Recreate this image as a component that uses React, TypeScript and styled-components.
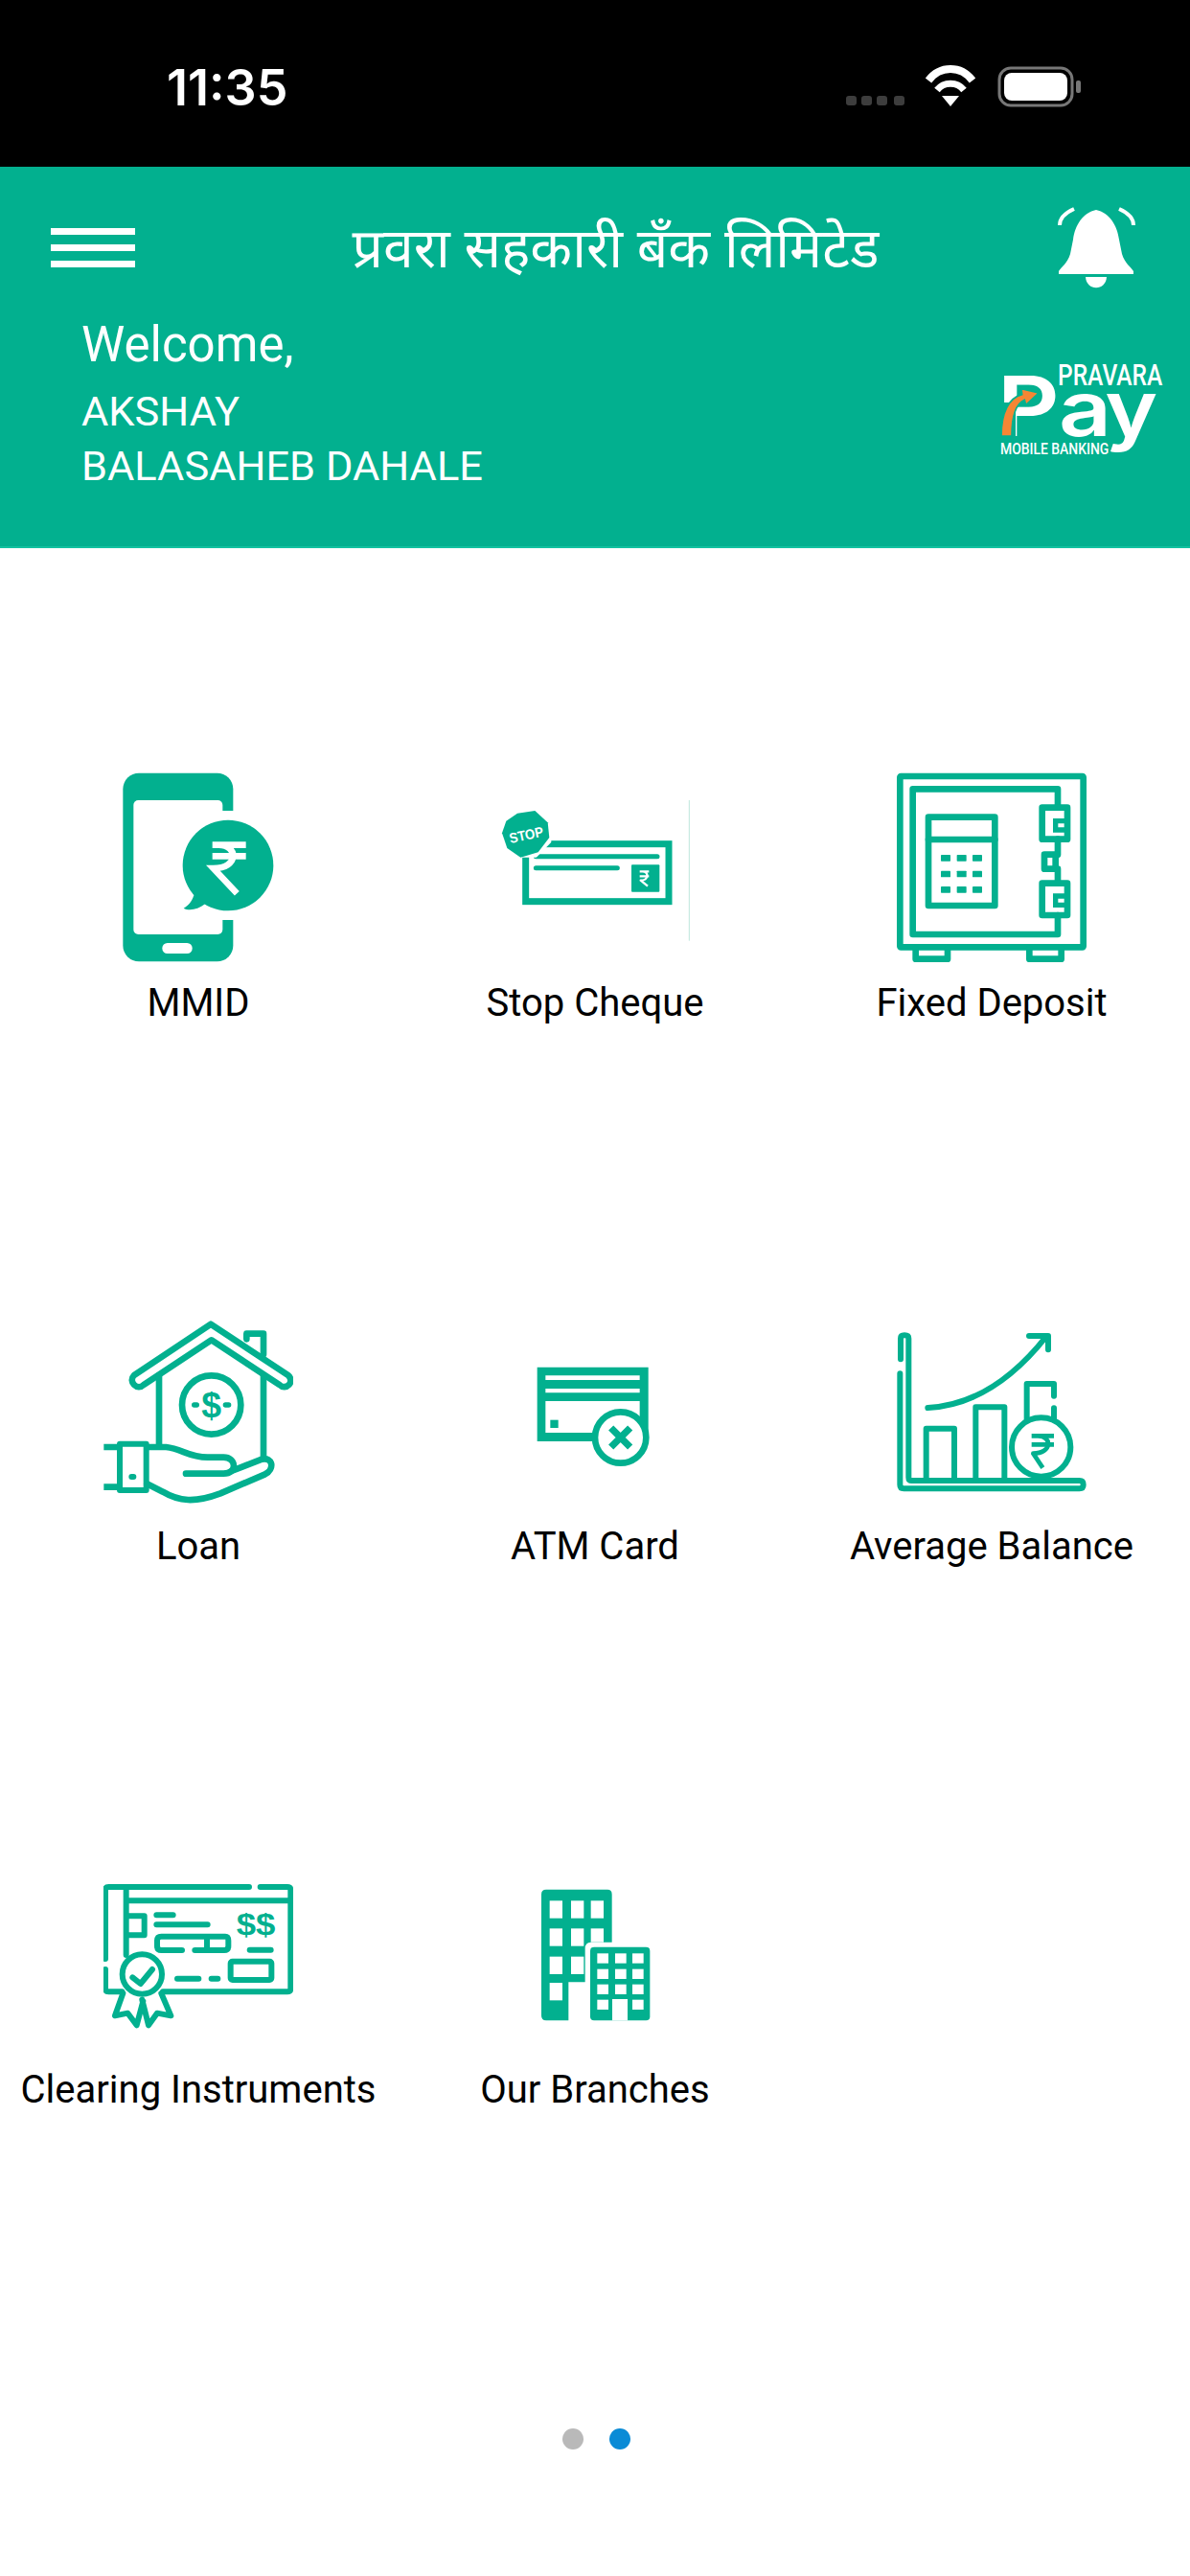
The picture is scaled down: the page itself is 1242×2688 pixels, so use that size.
import React from 'react';
import styled, { createGlobalStyle } from 'styled-components';

const GREEN = '#02b08f';

const GlobalStyle = createGlobalStyle`
  html, body {
    margin: 0;
    padding: 0;
    background: #ffffff;
    font-family: Roboto, "Liberation Sans", sans-serif;
  }
`;

const Screen = styled.div`
  width: 1242px;
  height: 2688px;
  display: flex;
  flex-direction: column;
  background: #ffffff;
  overflow: hidden;
`;

const StatusBar = styled.div`
  height: 174px;
  flex: none;
  background: #000000;
  display: flex;
  align-items: flex-start;
  justify-content: space-between;
  padding: 64px 113px 0 174px;
  box-sizing: border-box;
`;

const Clock = styled.span`
  font-family: Inter, Roboto, sans-serif;
  font-weight: 600;
  font-size: 52px;
  line-height: 56px;
  color: #ffffff;
`;

const StatusIcons = styled.svg`
  width: 250px;
  height: 46px;
  margin-top: 4px;
`;

const Header = styled.header`
  height: 398px;
  flex: none;
  background: ${GREEN};
  border-bottom: 2px solid #12c2a0;
  box-sizing: border-box;
  padding: 42px 16px 0 53px;
  display: flex;
  flex-direction: column;
`;

const TopRow = styled.div`
  display: flex;
  align-items: center;
  padding-right: 41px;
  height: 85px;
`;

const Burger = styled.div`
  width: 88px;
  flex: none;
  display: flex;
  flex-direction: column;
  gap: 10px;
`;

const BurgerBar = styled.span`
  display: block;
  height: 7px;
  background: #ffffff;
`;

const Title = styled.h1`
  flex: 1;
  margin: 14px 0 0;
  padding-left: 40px;
  text-align: center;
  color: #ffffff;
  font-family: "Noto Sans Devanagari", "Noto Serif Devanagari", "Lohit Devanagari", FreeSans, sans-serif;
  font-weight: 400;
  font-size: 57px;
  line-height: 85px;
`;

const Bell = styled.svg`
  width: 81px;
  height: 85px;
  flex: none;
`;

const InfoRow = styled.div`
  display: flex;
  justify-content: space-between;
  align-items: flex-start;
  padding-left: 32px;
  margin-top: 29px;
`;

const Welcome = styled.div`
  font-size: 51px;
  line-height: 60px;
  color: #ffffff;
`;

const UserName = styled.div<{ $first?: boolean }>`
  font-size: 43.4px;
  line-height: 57px;
  color: #ffffff;
  margin-top: ${(p) => (p.$first ? '11px' : '0')};
`;

const Logo = styled.svg`
  width: 186px;
  height: 113px;
  margin-top: 43px;
  overflow: visible;
`;

const Grid = styled.main`
  display: grid;
  grid-template-columns: repeat(3, 414px);
  grid-auto-rows: 567px;
  padding-top: 234px;
`;

const Cell = styled.div`
  display: flex;
  flex-direction: column;
  align-items: center;
`;

const IconSvg = styled.svg`
  width: 198px;
  height: 198px;
  flex: none;
  fill: none;
  stroke: ${GREEN};
  stroke-linecap: round;
  stroke-linejoin: round;
  stroke-width: 20;

  text {
    stroke: none;
    fill: ${GREEN};
    font-family: "Liberation Sans", sans-serif;
    font-weight: 700;
  }
`;

const Label = styled.span`
  margin-top: 21px;
  font-size: 40px;
  line-height: 44px;
  color: #000000;
  white-space: nowrap;
`;

const Pager = styled.div`
  display: flex;
  justify-content: center;
  gap: 27px;
  margin: 27px 0 0 2px;
`;

const Dot = styled.span<{ $active?: boolean }>`
  width: 22px;
  height: 22px;
  border-radius: 50%;
  background: ${(p) => (p.$active ? '#0a8bd6' : '#b9b9b9')};
`;

const MmidIcon = () => (
  <IconSvg viewBox="84 78 594 594">
    <rect x="145" y="80" width="345" height="590" rx="50" fill={GREEN} stroke="none" />
    <rect x="178" y="165" width="279" height="420" rx="15" fill="#fff" stroke="none" />
    <rect x="450" y="198" width="50" height="342" fill="#fff" stroke="none" />
    <rect x="268" y="612" width="94" height="33" rx="16" fill="#fff" stroke="none" />
    <circle cx="474" cy="369" r="142" fill={GREEN} stroke="none" />
    <path d="M367 462 C360 485 348 495 335 503 C350 512 380 508 402 490 Z" fill={GREEN} stroke="none" />
    <path d="M425 305 H530 M425 340 H530 M445 305 C505 305 510 378 428 378 L502 457" stroke="#fff" strokeWidth="20" strokeLinecap="butt" strokeLinejoin="miter" />
  </IconSvg>
);

const StopChequeIcon = () => (
  <IconSvg viewBox="66 -12 594 594">
    <rect x="146" y="212" width="448" height="180" strokeWidth="21" strokeLinejoin="miter" />
    <path d="M178 251 H558 M178 287 H433" strokeWidth="15" />
    <rect x="477" y="277" width="88" height="85" rx="3" fill={GREEN} stroke="none" />
    <path d="M503 298 H532 M503 313 H532 M512 298 C532 298 532 326 506 326 L528 344" stroke="#fff" strokeWidth="7" strokeLinecap="butt" />
    <polygon points="115,110 178,110 222,155 222,205 178,250 115,250 72,205 72,155" fill="#fff" stroke="#fff" strokeWidth="8" />
    <polygon points="120,116 175,108 215,145 220,192 185,238 130,254 88,225 72,178 85,140" fill={GREEN} stroke="none" />
    <text x="148" y="199" fontSize="44" textLength="108" lengthAdjust="spacingAndGlyphs" textAnchor="middle" transform="rotate(-12 148 185)" style={{ fill: '#fff' }}>STOP</text>
    <path d="M658 75 V515" stroke="#bfe6dd" strokeWidth="3" strokeLinecap="butt" />
  </IconSvg>
);

const FixedDepositIcon = () => (
  <IconSvg viewBox="48 48 594 594">
    <rect x="58" y="60" width="574" height="535" rx="3" />
    <path d="M552 158 V100 H98 V555 H552 V495 M552 257 V305 M552 350 V395" />
    <rect x="147" y="188" width="208" height="277" />
    <path d="M147 258 H355" />
    {[316, 366, 415].map((y) =>
      [201, 251, 300].map((x) => <rect key={`${x}-${y}`} x={x - 15} y={y - 10} width="30" height="20" rx="2" fill={GREEN} stroke="none" />),
    )}
    <rect x="503" y="158" width="79" height="99" />
    <path d="M580 200 H545 V228 H580" strokeLinecap="butt" strokeLinejoin="miter" strokeWidth="16" />
    <rect x="510" y="305" width="35" height="45" />
    <rect x="503" y="395" width="79" height="100" />
    <path d="M580 435 H545 V463 H580" strokeLinecap="butt" strokeLinejoin="miter" strokeWidth="16" />
    <path d="M107 600 V632 H207 V600 M463 600 V632 H563 V600" />
  </IconSvg>
);

const LoanIcon = () => (
  <IconSvg viewBox="54 39 594 594">
    <path d="M390 65 L150 225 C130 245 160 275 180 255 L392 115 L605 255 C625 275 655 245 632 225 Z" />
    <path d="M502 112 V95 H555 V160" />
    <path d="M228 225 V440 M555 225 V480" />
    <circle cx="392" cy="318" r="92" />
    <text x="392" y="358" fontSize="112" textAnchor="middle">$</text>
    <path d="M338 318 H346 M436 318 H446" strokeWidth="16" />
    <rect x="105" y="440" width="83" height="145" strokeWidth="18" />
    <path d="M55 450 H105 M55 575 H105" strokeLinecap="butt" />
    <path d="M142 543 H148" strokeWidth="18" />
    <path d="M190 450 H250 C300 455 320 482 380 482 H430 C470 482 475 533 430 533 H312" />
    <path d="M455 525 L550 488 C585 480 590 520 560 535 L420 595 C340 625 290 620 240 590 L190 565" />
  </IconSvg>
);

const AtmIcon = () => (
  <IconSvg viewBox="-54 -81 594 594">
    <path fillRule="evenodd" fill={GREEN} stroke="none" d="M62 80 H410 V312 H62 Z M88 106 V120 H383 V106 Z M88 147 V160 H383 V147 Z M88 186 V285 H383 V186 Z" />
    <rect x="103" y="245" width="25" height="25" fill={GREEN} stroke="none" />
    <circle cx="323" cy="300" r="80" fill="#fff" strokeWidth="20" />
    <path d="M293 270 L353 330 M353 270 L293 330" strokeWidth="22" strokeLinecap="butt" />
  </IconSvg>
);

const AverageBalanceIcon = () => (
  <IconSvg viewBox="48 9 594 594">
    <path strokeWidth="18" d="M60 145 V80 Q60 70 72 70 Q85 70 85 80 V515 Q85 525 95 525 H620 Q632 525 632 538 Q632 550 620 550 H70 Q58 550 58 538 V190" />
    <path strokeWidth="18" d="M140 520 V362 H228 V520 M295 520 V295 H385 V520" />
    <path strokeWidth="18" d="M145 297 C280 290 400 220 515 75 M462 72 H522 V115" />
    <path strokeWidth="18" d="M455 335 V222 H540 V260 M540 298 V335" />
    <circle cx="500" cy="420" r="92" fill="#fff" strokeWidth="18" />
    <path strokeWidth="14" strokeLinecap="butt" d="M470 385 H540 M470 412 H540 M490 385 C535 385 535 440 475 440 L505 485" />
  </IconSvg>
);

const ClearingIcon = () => (
  <IconSvg viewBox="54 0 594 594">
    <g strokeWidth="18">
      <path d="M510 87 H70 Q60 87 60 97 V312 M60 345 V405 Q60 415 70 415 H112 M240 415 H630 Q640 415 640 405 V97 Q640 87 630 87 H545" />
      <path d="M125 90 V300 M125 130 H640" />
      <path d="M130 178 H182 V238 H130" />
      <path d="M220 175 H272 M220 205 H380" />
      <path d="M300 285 H235 Q222 285 222 272 V255 Q222 242 235 242 H435 Q445 242 445 255 V272 Q445 285 432 285 H340 M378 245 V285" />
      <path d="M512 284 H578" />
      <rect x="452" y="320" width="128" height="58" rx="6" />
      <path d="M285 374 H352 M392 374 H412" />
      <circle cx="175" cy="360" r="62" fill="#fff" />
      <path d="M145 370 L170 390 L207 345" />
      <path d="M115 420 L90 490 L130 482 L158 520 L178 445 M235 420 L265 490 L222 482 L195 520 L175 440" />
    </g>
    <text x="470" y="236" fontSize="96" textLength="122" lengthAdjust="spacingAndGlyphs">$$</text>
  </IconSvg>
);

const BranchesIcon = () => (
  <IconSvg viewBox="-54 -30 594 594">
    <path fill={GREEN} stroke="none" d="M90 65 H282 Q296 65 296 80 V230 H230 Q212 230 212 250 V355 H160 V475 H90 Q75 475 75 460 V80 Q75 65 90 65 Z" />
    {[100, 187, 275].map((y) =>
      [101, 168, 230].map((x) =>
        y === 275 && x === 230 ? null : (
          <rect key={`${x}-${y}`} x={x} y={y} width="40" height={x === 230 && y === 187 ? 43 : 55} fill="#fff" stroke="none" />
        ),
      ),
    )}
    <rect x="101" y="357" width="40" height="55" fill="#fff" stroke="none" />
    <rect x="228" y="245" width="187" height="230" rx="12" fill={GREEN} stroke="none" />
    {[265, 314, 362, 410].map((y) =>
      [250, 306, 360].map((x) =>
        y === 410 && x === 306 ? null : (
          <rect key={`${x}-${y}`} x={x} y={y} width="35" height="31" fill="#fff" stroke="none" />
        ),
      ),
    )}
    <rect x="297" y="408" width="48" height="67" fill="#fff" stroke="none" />
  </IconSvg>
);

const items = [
  { label: 'MMID', Icon: MmidIcon },
  { label: 'Stop Cheque', Icon: StopChequeIcon },
  { label: 'Fixed Deposit', Icon: FixedDepositIcon },
  { label: 'Loan', Icon: LoanIcon },
  { label: 'ATM Card', Icon: AtmIcon },
  { label: 'Average Balance', Icon: AverageBalanceIcon },
  { label: 'Clearing Instruments', Icon: ClearingIcon },
  { label: 'Our Branches', Icon: BranchesIcon },
];

const App = () => (
  <>
    <GlobalStyle />
    <Screen>
      <StatusBar>
        <Clock>11:35</Clock>
        <StatusIcons viewBox="878 68 250 46">
          {[882, 898, 914, 932].map((x) => (
            <rect key={x} x={x} y="100" width="11" height="10" rx="3" fill="#3d3d3d" />
          ))}
          <path d="M968 84 C980 68 1002 68 1014 84" stroke="#fff" strokeWidth="8" fill="none" />
          <path d="M977 94 C984 85 998 85 1005 94" stroke="#fff" strokeWidth="7" fill="none" />
          <path d="M982 100 H1000 L991 111 Z" fill="#fff" />
          <rect x="1042" y="71" width="76" height="39" rx="12" fill="none" stroke="#777" strokeWidth="3" />
          <rect x="1047" y="76" width="66" height="29" rx="8" fill="#fff" />
          <rect x="1122" y="84" width="5" height="13" rx="2" fill="#777" />
        </StatusIcons>
      </StatusBar>
      <Header>
        <TopRow>
          <Burger>
            <BurgerBar />
            <BurgerBar />
            <BurgerBar />
          </Burger>
          <Title>प्रवरा सहकारी बँक लिमिटेड</Title>
          <Bell viewBox="1104 216 81 85">
            <path d="M1144 219 C1130 222 1122 235 1120 250 L1117 265 C1114 275 1108 278 1105 283 V286 H1183 V283 C1180 278 1174 275 1171 265 L1168 250 C1166 235 1158 222 1144 219 Z" fill="#fff" />
            <path d="M1133 289 H1155 C1154 304 1134 304 1133 289 Z" fill="#fff" />
            <path d="M1121 218 C1112 222 1106 228 1106 235 M1168 218 C1177 222 1183 228 1183 235" fill="none" stroke="#fff" strokeWidth="4" />
          </Bell>
        </TopRow>
        <InfoRow>
          <div>
            <Welcome>Welcome,</Welcome>
            <UserName $first>AKSHAY</UserName>
            <UserName>BALASAHEB DAHALE</UserName>
          </div>
          <Logo viewBox="60 39 558 339">
            <text x="252" y="125" fontSize="92" fontFamily="Roboto, sans-serif" fontWeight="500" fill="#fff" textLength="328" lengthAdjust="spacingAndGlyphs">PRAVARA</text>
            <g fontFamily="Inter, sans-serif" fontWeight="600" fill="#fff">
              <text x="62" y="285" fontSize="261" textLength="195" lengthAdjust="spacingAndGlyphs">P</text>
              <text x="255" y="285" fontSize="240" textLength="165" lengthAdjust="spacingAndGlyphs">a</text>
              <text x="400" y="285" fontSize="240" textLength="165" lengthAdjust="spacingAndGlyphs">y</text>
            </g>
            <rect x="60" y="180" width="60" height="110" fill={GREEN} />
            <path d="M75 285 C75 210 100 165 140 155 L138 137 L192 150 L152 188 L148 172 C118 185 108 230 108 285 Z" fill="#f58634" stroke={GREEN} strokeWidth="5" />
            <text x="72" y="343" fontSize="50" fontFamily="Roboto, sans-serif" fontWeight="500" fill="#fff" textLength="340" lengthAdjust="spacingAndGlyphs">MOBILE BANKING</text>
          </Logo>
        </InfoRow>
      </Header>
      <Grid>
        {items.map(({ label, Icon }) => (
          <Cell key={label}>
            <Icon />
            <Label>{label}</Label>
          </Cell>
        ))}
      </Grid>
      <Pager>
        <Dot />
        <Dot $active />
      </Pager>
    </Screen>
  </>
);

export default App;
